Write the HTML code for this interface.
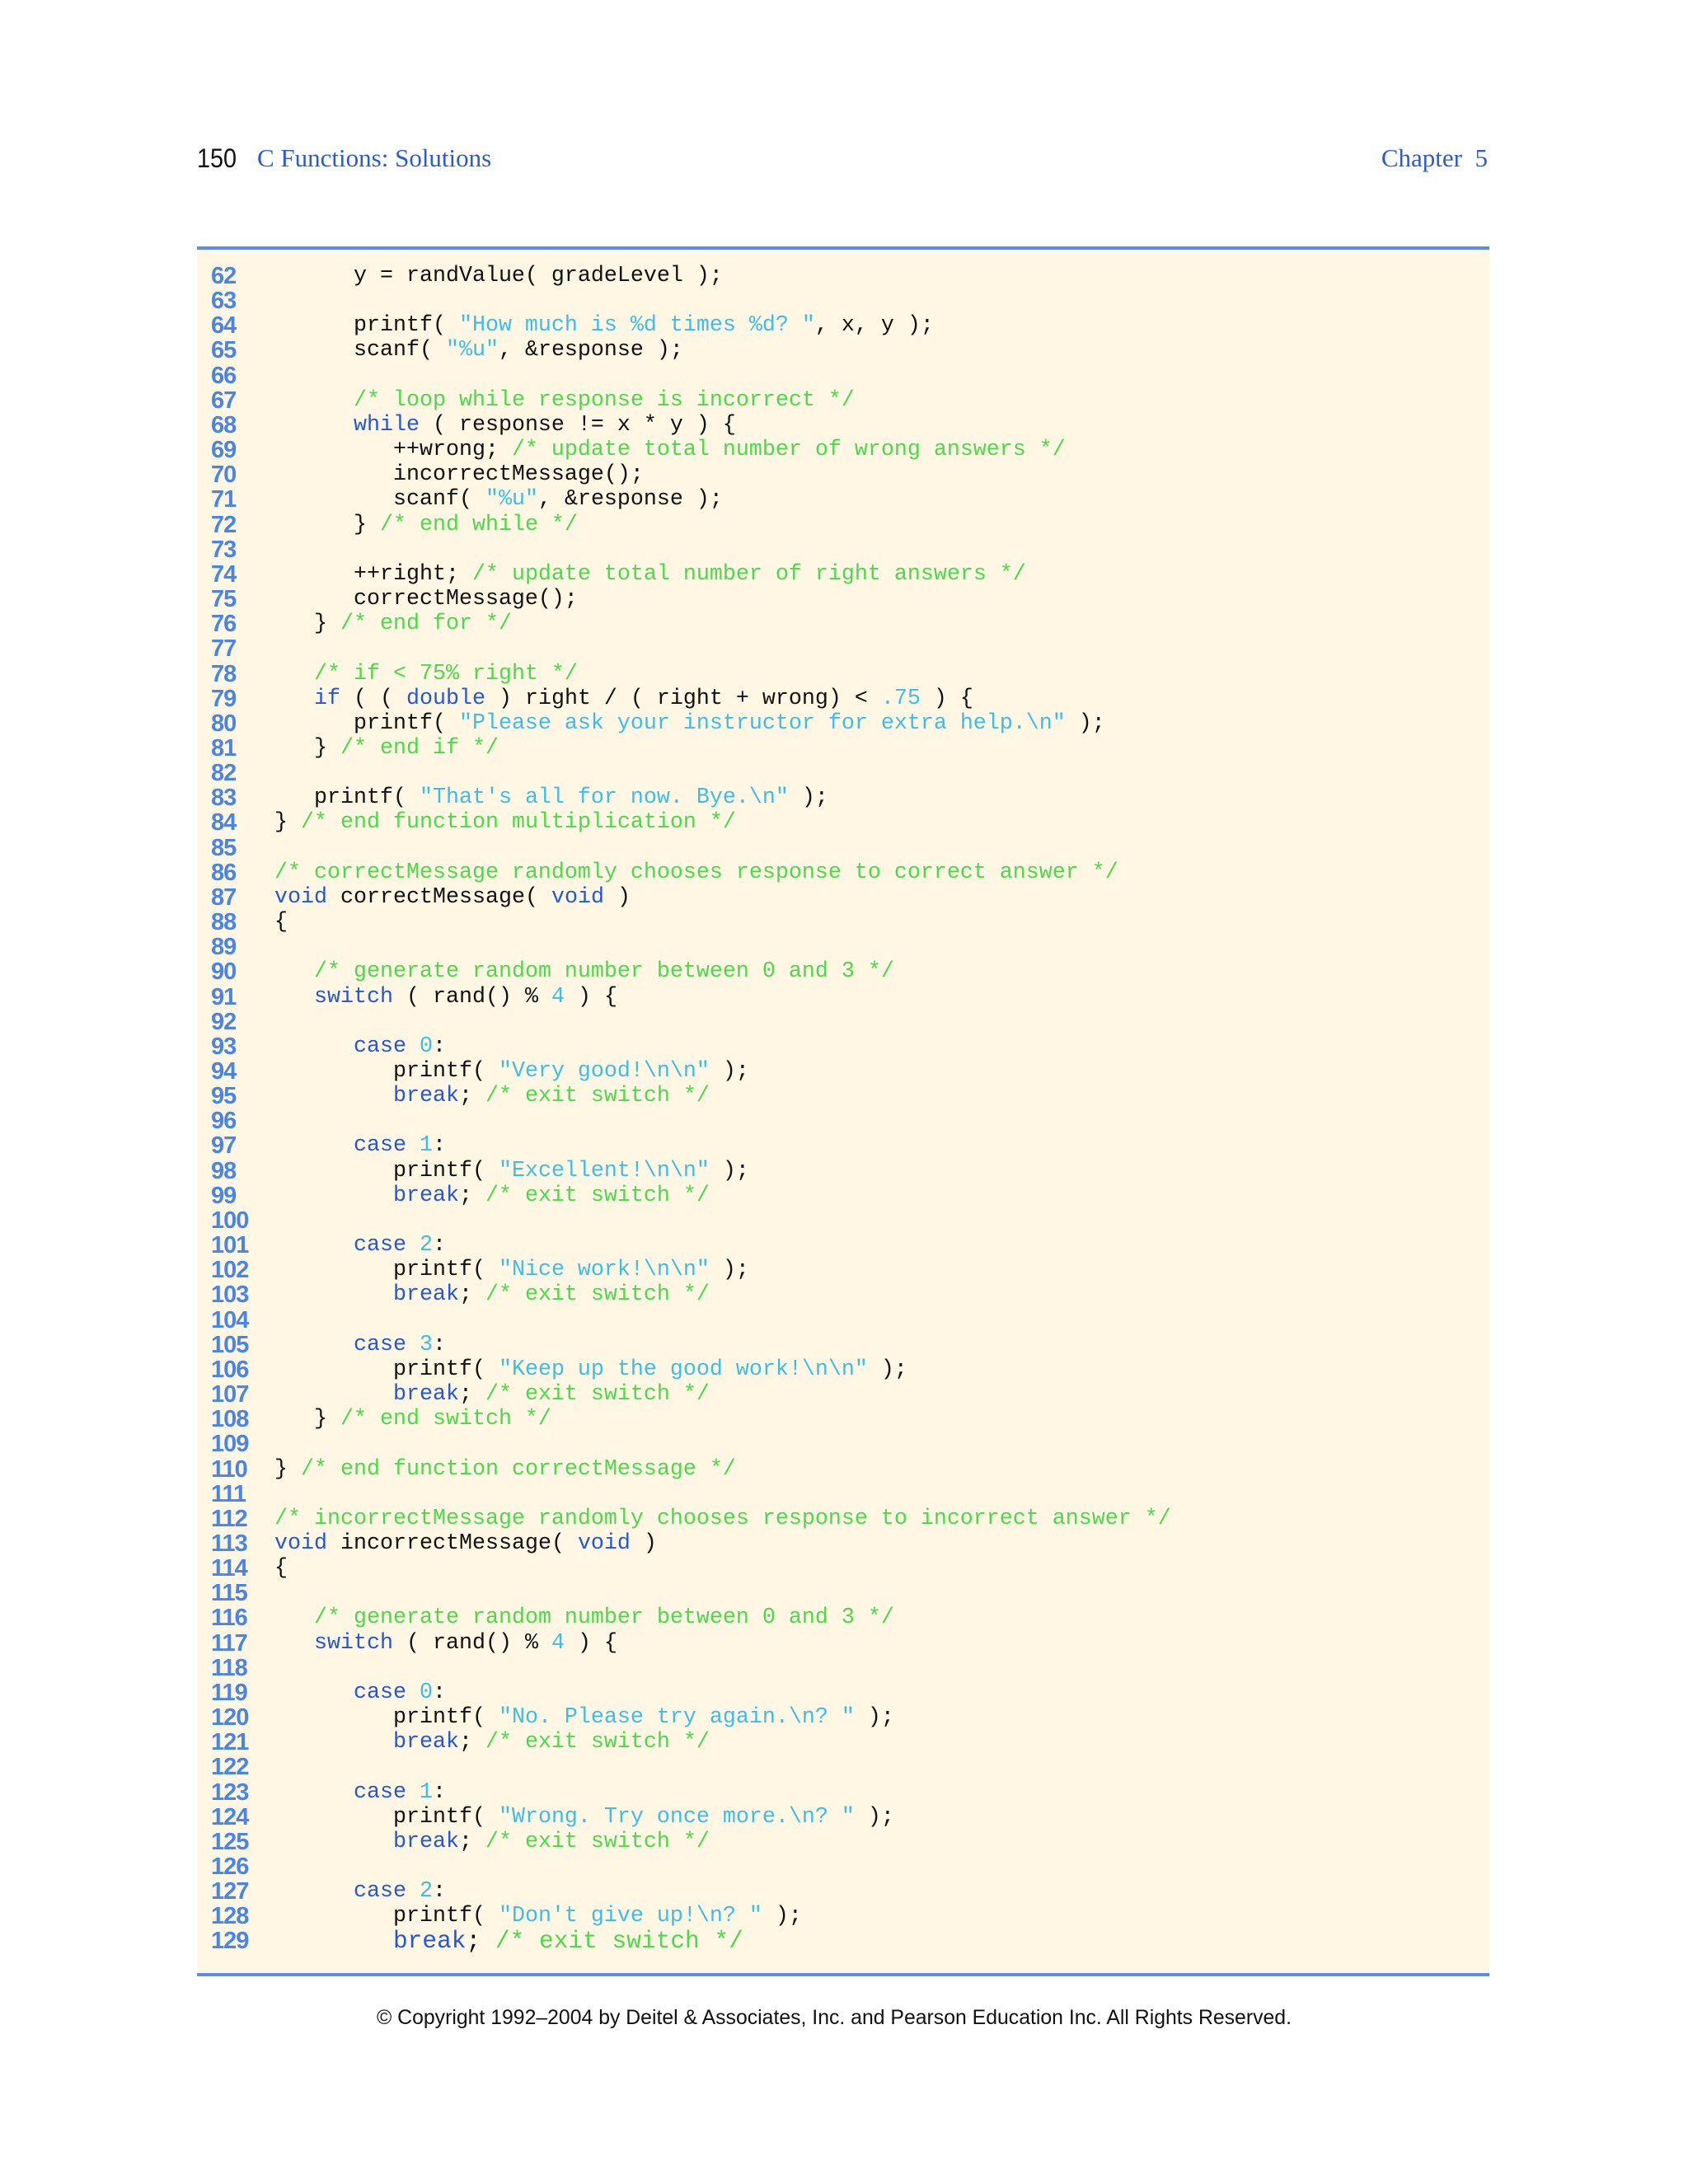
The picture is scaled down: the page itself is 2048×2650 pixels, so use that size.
<!DOCTYPE html>
<html><head><meta charset="utf-8">
<style>
html,body{margin:0;padding:0;background:#fff;}
body{width:2048px;height:2650px;position:relative;overflow:hidden;}
.hdr{position:absolute;top:172px;font-family:"Liberation Serif",serif;font-size:31px;color:#2a5ad6;line-height:40px;}
.pg{position:absolute;left:239px;top:172px;font-family:"Liberation Sans",sans-serif;font-size:32px;color:#111;line-height:40px;transform:scaleX(0.9);transform-origin:left;}
.box{position:absolute;left:239px;top:299px;width:1568px;height:2091px;background:#fff7e3;border-top:4px solid #5a8ee8;border-bottom:4px solid #5a8ee8;}
.nums{position:absolute;left:256px;top:320px;font-family:"Liberation Sans",sans-serif;font-weight:bold;font-size:29px;color:#4a84e6;line-height:30.16px;margin:0;white-space:pre;letter-spacing:-1px;}
.code{position:absolute;left:333px;top:320px;font-family:"Liberation Mono",monospace;font-size:26.67px;color:#111;line-height:30.16px;margin:0;white-space:pre;}
.k{color:#2456d8}.s{color:#3cbde8}.c{color:#4cd84c}
.big{font-size:29.5px;}
.foot{position:absolute;left:0;width:2024px;text-align:center;top:2434px;font-family:"Liberation Sans",sans-serif;font-size:24.8px;color:#111;line-height:30px;}
</style></head><body>
<div class="pg">150</div>
<div class="hdr" style="left:312px;">C Functions: Solutions</div>
<div class="hdr" style="right:243px;">Chapter&nbsp;&nbsp;5</div>
<div class="box"></div>
<pre class="nums">62
63
64
65
66
67
68
69
70
71
72
73
74
75
76
77
78
79
80
81
82
83
84
85
86
87
88
89
90
91
92
93
94
95
96
97
98
99
100
101
102
103
104
105
106
107
108
109
110
111
112
113
114
115
116
117
118
119
120
121
122
123
124
125
126
127
128
129</pre>
<pre class="code">      y = randValue( gradeLevel );

      printf( <span class="s">"How much is %d times %d? "</span>, x, y );
      scanf( <span class="s">"%u"</span>, &amp;response );

      <span class="c">/* loop while response is incorrect */</span>
      <span class="k">while</span> ( response != x * y ) {
         ++wrong; <span class="c">/* update total number of wrong answers */</span>
         incorrectMessage();
         scanf( <span class="s">"%u"</span>, &amp;response );
      } <span class="c">/* end while */</span>

      ++right; <span class="c">/* update total number of right answers */</span>
      correctMessage();
   } <span class="c">/* end for */</span>

   <span class="c">/* if &lt; 75% right */</span>
   <span class="k">if</span> ( ( <span class="k">double</span> ) right / ( right + wrong) &lt; <span class="s">.75</span> ) {
      printf( <span class="s">"Please ask your instructor for extra help.\n"</span> );
   } <span class="c">/* end if */</span>

   printf( <span class="s">"That's all for now. Bye.\n"</span> );
} <span class="c">/* end function multiplication */</span>

<span class="c">/* correctMessage randomly chooses response to correct answer */</span>
<span class="k">void</span> correctMessage( <span class="k">void</span> )
{

   <span class="c">/* generate random number between 0 and 3 */</span>
   <span class="k">switch</span> ( rand() % <span class="s">4</span> ) {

      <span class="k">case</span> <span class="s">0</span>:
         printf( <span class="s">"Very good!\n\n"</span> );
         <span class="k">break</span>; <span class="c">/* exit switch */</span>

      <span class="k">case</span> <span class="s">1</span>:
         printf( <span class="s">"Excellent!\n\n"</span> );
         <span class="k">break</span>; <span class="c">/* exit switch */</span>

      <span class="k">case</span> <span class="s">2</span>:
         printf( <span class="s">"Nice work!\n\n"</span> );
         <span class="k">break</span>; <span class="c">/* exit switch */</span>

      <span class="k">case</span> <span class="s">3</span>:
         printf( <span class="s">"Keep up the good work!\n\n"</span> );
         <span class="k">break</span>; <span class="c">/* exit switch */</span>
   } <span class="c">/* end switch */</span>

} <span class="c">/* end function correctMessage */</span>

<span class="c">/* incorrectMessage randomly chooses response to incorrect answer */</span>
<span class="k">void</span> incorrectMessage( <span class="k">void</span> )
{

   <span class="c">/* generate random number between 0 and 3 */</span>
   <span class="k">switch</span> ( rand() % <span class="s">4</span> ) {

      <span class="k">case</span> <span class="s">0</span>:
         printf( <span class="s">"No. Please try again.\n? "</span> );
         <span class="k">break</span>; <span class="c">/* exit switch */</span>

      <span class="k">case</span> <span class="s">1</span>:
         printf( <span class="s">"Wrong. Try once more.\n? "</span> );
         <span class="k">break</span>; <span class="c">/* exit switch */</span>

      <span class="k">case</span> <span class="s">2</span>:
         printf( <span class="s">"Don't give up!\n? "</span> );
         <span class="big"><span class="k">break</span>; <span class="c">/* exit switch */</span></span></pre>
<div class="foot">© Copyright 1992–2004 by Deitel &amp; Associates, Inc. and Pearson Education Inc. All Rights Reserved.</div>
</body></html>
